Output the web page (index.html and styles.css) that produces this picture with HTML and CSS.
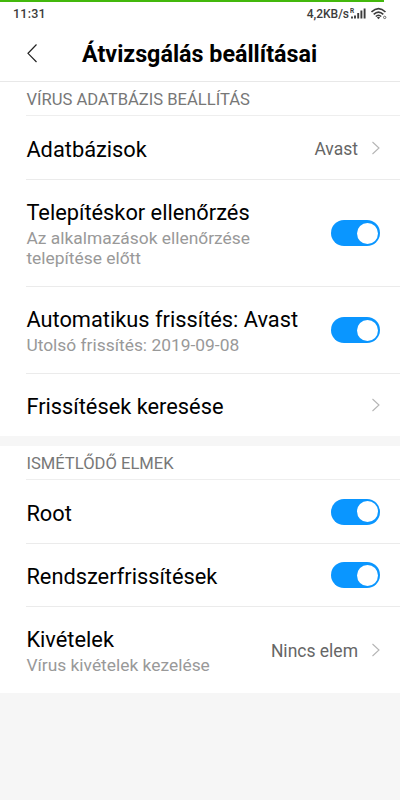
FILE: index.html
```html
<!DOCTYPE html>
<html lang="hu">
<head>
<meta charset="utf-8">
<title>Átvizsgálás beállításai</title>
<link rel="stylesheet" href="styles.css">
</head>
<body>
<div class="progress"></div>
<div class="status">
  <span class="clock">11:31</span>
  <span class="speed">4,2KB/s</span>
  <svg class="signal" width="17" height="14" viewBox="0 0 17 14"><text class="roaming" x="0" y="5.5">R</text><path d="M2 9.6v1.9M5 8.4v3.1M8.2 6.1v5.4M11.4 3.6v7.9M14.6 1.5v10" fill="none" stroke="#3c3c3c" stroke-width="1.9"/></svg>
  <svg class="wifi" width="17" height="14" viewBox="0 0 17 14"><g fill="none" stroke="#3c3c3c" stroke-width="1.6"><path d="M.5 5Q7.5-1.6 14.5 5M2.7 7.3Q7.5 2.8 12.3 7.3M4.8 9.5Q7.5 7 10.2 9.5"/></g><path d="M5.9 10.5Q7.5 9.2 9.1 10.5L7.5 12.2Z" fill="#3c3c3c"/><circle cx="13.7" cy="10.4" r="1.2" fill="none" stroke="#666" stroke-width="1"/></svg>
</div>
<header class="header">
  <svg class="back" width="12" height="20" viewBox="0 0 12 20"><path d="M10.5 1.5L2 10.3L10.5 19" fill="none" stroke="#222" stroke-width="1.2"/></svg>
  <h1>Átvizsgálás beállításai</h1>
</header>
<section class="group">
  <h2>VÍRUS ADATBÁZIS BEÁLLÍTÁS</h2>
  <div class="row">
    <div class="label"><div class="title">Adatbázisok</div></div>
    <span class="value">Avast</span>
    <svg class="chevron" width="9" height="14" viewBox="0 0 9 14"><path d="M1.5 1L8 7L1.5 13"/></svg>
  </div>
  <div class="row tall">
    <div class="label double"><div class="title">Telepítéskor ellenőrzés</div><div class="sub">Az alkalmazások ellenőrzése<br>telepítése előtt</div></div>
    <span class="switch"></span>
  </div>
  <div class="row medium">
    <div class="label double"><div class="title">Automatikus frissítés: Avast</div><div class="sub">Utolsó frissítés: 2019-09-08</div></div>
    <span class="switch"></span>
  </div>
  <div class="row last">
    <div class="label"><div class="title">Frissítések keresése</div></div>
    <svg class="chevron" width="9" height="14" viewBox="0 0 9 14"><path d="M1.5 1L8 7L1.5 13"/></svg>
  </div>
</section>
<section class="group">
  <h2>ISMÉTLŐDŐ ELMEK</h2>
  <div class="row">
    <div class="label"><div class="title">Root</div></div>
    <span class="switch"></span>
  </div>
  <div class="row short">
    <div class="label"><div class="title">Rendszerfrissítések</div></div>
    <span class="switch"></span>
  </div>
  <div class="row medium last">
    <div class="label double"><div class="title">Kivételek</div><div class="sub">Vírus kivételek kezelése</div></div>
    <span class="value">Nincs elem</span>
    <svg class="chevron" width="9" height="14" viewBox="0 0 9 14"><path d="M1.5 1L8 7L1.5 13"/></svg>
  </div>
</section>
</body>
</html>
```
FILE: styles.css
```css
* { box-sizing: border-box; }
body {
  margin: 0;
  height: 800px;
  overflow: hidden;
  background: #f6f6f6;
  font-family: Roboto, "Noto Sans", sans-serif;
  color: #000;
}
.progress { height: 2px; background: linear-gradient(to right, #43b80c 384px, #fff 384px); }
.status {
  display: flex;
  align-items: center;
  height: 23px;
  padding: 0 12px 0 13px;
  background: #fff;
  color: #3c3c3c;
  font-weight: 500;
}
.clock { flex: 1; font-size: 12.5px; letter-spacing: .25px; }
.speed { font-size: 12px; }
.signal { margin-left: 1px; }
.wifi { margin-left: 4px; }
.roaming { font: 700 6.5px Roboto, sans-serif; fill: #3c3c3c; }
.header {
  display: flex;
  align-items: center;
  height: 57px;
  padding-left: 26px;
  background: #fff;
  border-bottom: 1px solid #e8e8e8;
}
.back { margin-right: 44px; }
h1 { margin: 0; padding-top: 1px; font-size: 23.3px; font-weight: 700; line-height: 28px; white-space: nowrap; }
.group { margin-bottom: 10px; background: #fff; }
h2 {
  height: 34px;
  margin: 0 0 0 26px;
  padding-left: .4px;
  border-bottom: 1px solid #eee;
  color: #777;
  font-size: 16.6px;
  font-weight: 400;
  line-height: 36px;
}
.row {
  display: flex;
  align-items: center;
  height: 64px;
  margin-left: 26px;
  padding: 0 20px 0 .4px;
  border-bottom: 1px solid #ebebeb;
}
.tall { height: 107px; }
.medium { height: 87px; }
.short { height: 63px; }
.last { height: 62px; border-bottom: 0; }
.medium.last { height: 86px; }
.label { flex: 1; padding-top: 4px; white-space: nowrap; }
.double { padding-top: 0; }
.title { font-size: 21.8px; line-height: 28px; }
.double .title { margin-bottom: 2px; line-height: 27px; }
.sub { color: #999; font-size: 17.4px; line-height: 20px; }
.value { padding-top: 3px; color: #666; font-size: 17.5px; }
.medium .value { padding-top: 1px; }
.chevron { margin-left: 13px; fill: none; stroke: #b5b5b5; stroke-width: 1.1; }
.switch {
  display: flex;
  align-items: center;
  justify-content: flex-end;
  width: 49px;
  height: 26px;
  padding: 0 2.5px;
  border-radius: 13px;
  background: #0a96ff;
}
.switch::after { content: ""; width: 21px; height: 21px; border-radius: 50%; background: #fff; }
```
